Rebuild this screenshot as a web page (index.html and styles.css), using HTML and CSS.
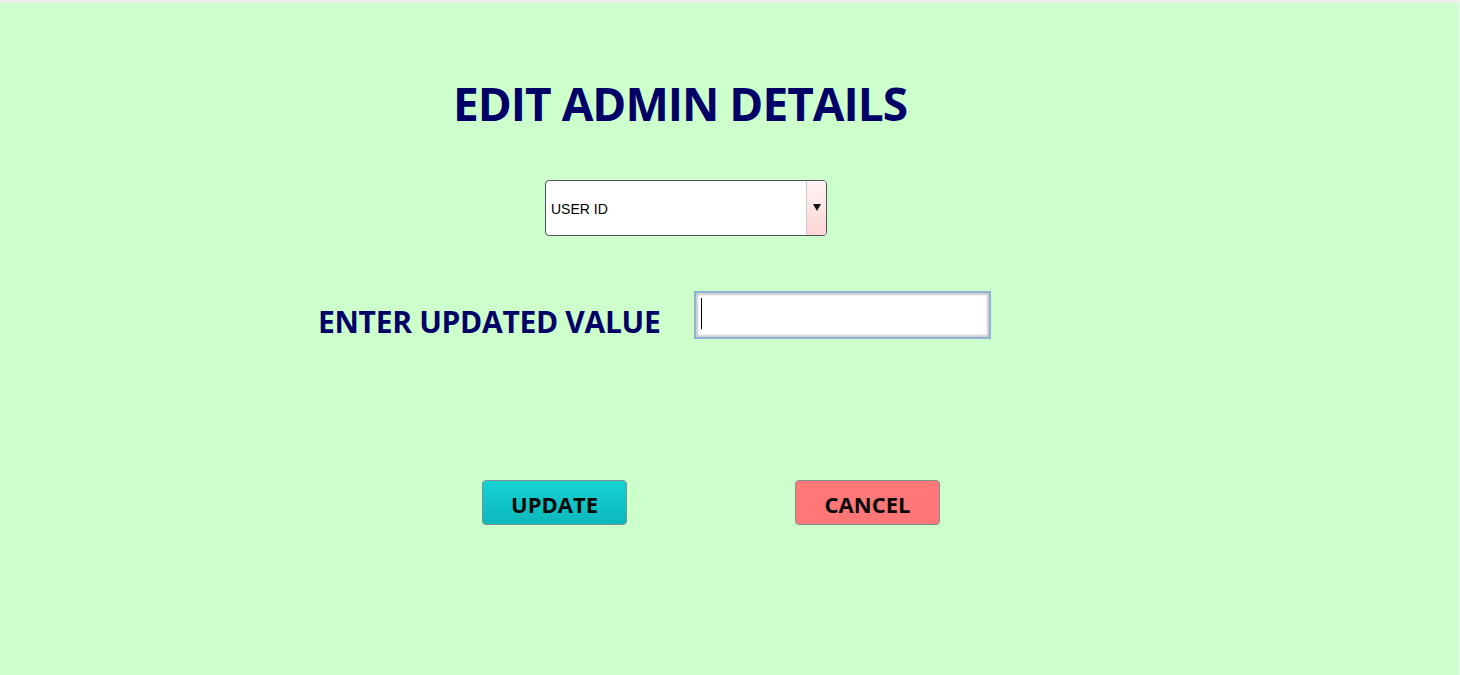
FILE: index.html
```html
<!DOCTYPE html>
<html>
<head>
<meta charset="utf-8">
<title>Edit Admin Details</title>
<link rel="stylesheet" href="styles.css">
</head>
<body>
<div class="frame">
  <h1 class="title">EDIT ADMIN DETAILS</h1>
  <div class="row row-select">
    <div class="combo">
      <span class="combo-text">USER ID</span>
      <span class="combo-btn"><span class="tri"></span></span>
    </div>
  </div>
  <div class="row row-input">
    <label class="label">ENTER UPDATED VALUE</label>
    <div class="textbox"><span class="caret"></span></div>
  </div>
  <div class="row row-buttons">
    <button class="btn btn-update">UPDATE</button>
    <button class="btn btn-cancel">CANCEL</button>
  </div>
</div>
</body>
</html>
```

FILE: styles.css
```css
html, body {
  margin: 0;
  padding: 0;
  background: #f0f0f0;
}
.frame {
  margin-top: 3px;
  margin-right: 1px;
  height: 672px;
  background: #ccffcc;
  overflow: hidden;
  font-family: "Open Sans", "Noto Sans", sans-serif;
}
.title {
  margin: 0;
  padding: 77px 0 0 453px;
  font-size: 46px;
  line-height: 46px;
  font-weight: 700;
  letter-spacing: -1px;
  color: #000066;
}
.row {
  display: flex;
}
.row-select {
  margin-top: 54px;
  padding-left: 545px;
}
.combo {
  box-sizing: border-box;
  width: 282px;
  height: 56px;
  border: 1px solid #50505c;
  border-radius: 4px;
  background: #fff;
  display: flex;
  align-items: stretch;
  overflow: hidden;
}
.combo-text {
  flex: 1;
  display: flex;
  align-items: center;
  padding: 1px 0 0 5px;
  font-family: "Liberation Sans", Arial, sans-serif;
  font-size: 14px;
  color: #000;
}
.combo-btn {
  width: 20px;
  border-left: 1px solid #c8c8c8;
  background: linear-gradient(#fff4f4, #ffd4d4);
  display: flex;
  justify-content: center;
  padding-top: 23px;
  box-sizing: border-box;
}
.tri {
  width: 0;
  height: 0;
  border-left: 4px solid transparent;
  border-right: 4px solid transparent;
  border-top: 7px solid #111;
}
.row-input {
  margin-top: 55px;
  padding-left: 318px;
  align-items: flex-start;
}
.label {
  width: 376px;
  margin-top: 16px;
  font-size: 30px;
  line-height: 30px;
  font-weight: 700;
  letter-spacing: -0.3px;
  color: #000066;
}
.textbox {
  box-sizing: border-box;
  width: 297px;
  height: 48px;
  border: 2px solid #8fb2d6;
  background: #fff;
  box-shadow: inset 0 0 2px 2px #cccccc;
  padding: 5px 0 0 5px;
}
.caret {
  display: block;
  width: 1px;
  height: 31px;
  background: #000;
}
.row-buttons {
  margin-top: 141px;
  padding-left: 482px;
  gap: 168px;
}
.btn {
  box-sizing: border-box;
  width: 145px;
  height: 45px;
  border: 1px solid #7f8f8f;
  border-radius: 4px;
  font-family: "Open Sans", "Noto Sans", sans-serif;
  font-size: 22px;
  font-weight: 700;
  color: #0a0a0a;
  padding: 3px 0 0;
}
.btn-update {
  background: linear-gradient(#16d2d2, #0bb8bc);
}
.btn-cancel {
  background: #ff7777;
}
```
